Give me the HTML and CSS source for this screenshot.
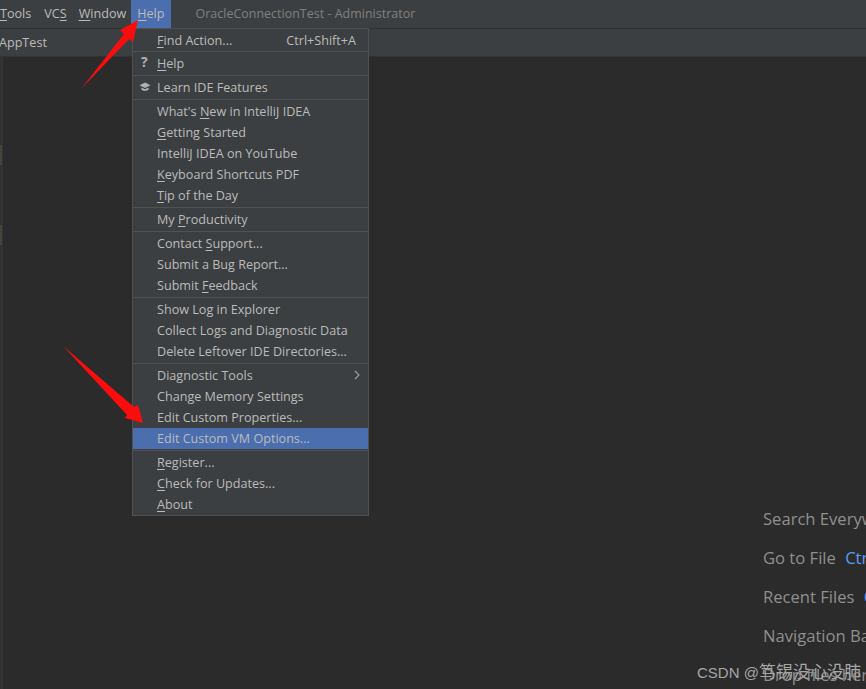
FILE: index.html
```html
<!DOCTYPE html>
<html lang="en">
<head>
<meta charset="utf-8">
<title>OracleConnectionTest - Administrator</title>
<link rel="stylesheet" href="styles.css">
</head>
<body>
<div class="ide">
  <header class="titlebar">
    <nav class="menubar">
      <span class="mb-item mb-tools"><u>T</u>ools</span>
      <span class="mb-item">VC<u>S</u></span>
      <span class="mb-item"><u>W</u>indow</span>
      <span class="mb-item mb-active"><u>H</u>elp</span>
    </nav>
    <span class="wintitle">OracleConnectionTest - Administrator</span>
  </header>
  <div class="navbar"><span class="crumb">AppTest</span></div>
  <main class="workspace">
    <aside class="gutter"><span class="mark mark-a"></span><span class="mark mark-b"></span></aside>
    <section class="editor">
      <ul class="hints">
        <li>Search Everywhere <b>Double Shift</b></li>
        <li>Go to File <b>Ctrl+Shift+N</b></li>
        <li>Recent Files <b>Ctrl+E</b></li>
        <li>Navigation Bar <b>Alt+Home</b></li>
        <li>Drop files here to open</li>
      </ul>
    </section>
  </main>

  <div class="menu">
    <div class="group"><div class="row"><span><u>F</u>ind Action...</span><span class="shortcut">Ctrl+Shift+A</span></div></div>
    <div class="group"><div class="row"><span class="qmark">?</span><span><u>H</u>elp</span></div></div>
    <div class="group"><div class="row">
      <svg class="cap" viewBox="0 0 12 10" width="12" height="10"><path d="M6 0.5 0.5 3.2 6 6 11.5 3.2Z"/><path d="M2.4 5.4V7.4C3.5 9.2 8.5 9.2 9.6 7.4V5.4L6 7.2Z"/></svg>
      <span>Learn IDE Features</span></div></div>
    <div class="group">
      <div class="row"><span>What's <u>N</u>ew in IntelliJ IDEA</span></div>
      <div class="row"><span><u>G</u>etting Started</span></div>
      <div class="row"><span>IntelliJ IDEA on YouTube</span></div>
      <div class="row"><span><u>K</u>eyboard Shortcuts PDF</span></div>
      <div class="row"><span><u>T</u>ip of the Day</span></div>
    </div>
    <div class="group"><div class="row"><span>My <u>P</u>roductivity</span></div></div>
    <div class="group">
      <div class="row"><span>Contact <u>S</u>upport...</span></div>
      <div class="row"><span>Submit a Bug Report...</span></div>
      <div class="row"><span>Submit <u>F</u>eedback</span></div>
    </div>
    <div class="group">
      <div class="row"><span>Show Log in Explorer</span></div>
      <div class="row"><span>Collect Logs and Diagnostic Data</span></div>
      <div class="row"><span>Delete Leftover IDE Directories...</span></div>
    </div>
    <div class="group">
      <div class="row"><span>Diagnostic Tools</span>
        <svg class="chev" viewBox="0 0 6 10" width="6" height="10"><path d="M1 1l4 4-4 4"/></svg></div>
      <div class="row"><span>Change Memory Settings</span></div>
      <div class="row"><span>Edit Custom Properties...</span></div>
      <div class="row row-active"><span>Edit Custom VM Options...</span></div>
    </div>
    <div class="group">
      <div class="row"><span><u>R</u>egister...</span></div>
      <div class="row"><span><u>C</u>heck for Updates...</span></div>
      <div class="row"><span><u>A</u>bout</span></div>
    </div>
  </div>

  <svg class="arrows" viewBox="0 0 866 689" width="866" height="689">
    <path d="M81 89 124 34 120 30 138 20 133 42 129 39Z"/>
    <path d="M63 346 134 407 138 405 143 423 125 418 127 415Z"/>
  </svg>
  <div class="watermark">CSDN @<span class="wm-cjk">笃锡没心没肺</span></div>
</div>
</body>
</html>
```

FILE: styles.css
```css
* { box-sizing: border-box; }
html, body { margin: 0; height: 100%; }
body { background: #2b2b2b; overflow: hidden; font-family: "Open Sans", "Noto Sans", sans-serif; }
u { text-underline-offset: 2px; text-decoration-thickness: 1px; }
.ide { position: relative; width: 866px; height: 689px; overflow: hidden; display: flex; flex-direction: column; }

.titlebar { height: 29px; flex: none; background: #3c3f41; border-bottom: 1px solid #323232; display: flex; align-items: stretch; font-size: 12.6px; color: #bbbbbb; }
.menubar { display: flex; margin-left: -6px; }
.mb-item { display: flex; align-items: center; padding: 0 6px 1px; white-space: nowrap; }
.mb-tools { padding-right: 7px; }
.mb-active { background: #4b6eaf; height: 28px; margin-left: -1px; }
.wintitle { margin-left: 25px; display: flex; align-items: center; height: 27px; color: #808080; font-size: 12.4px; letter-spacing: .05px; }

.navbar { height: 28px; flex: none; background: #3c3f41; border-bottom: 1px solid #323232; display: flex; align-items: center; font-size: 12.6px; color: #bbbbbb; }
.crumb { margin-left: -1px; }

.workspace { flex: 1; display: flex; min-height: 0; }
.gutter { width: 3px; flex: none; background: #313335; display: flex; flex-direction: column; }
.mark { display: block; width: 2px; height: 20px; background: #45433a; }
.mark-a { margin-top: 88px; }
.mark-b { margin-top: 60px; }
.editor { flex: 1; background: #2b2b2b; min-width: 0; padding: 442px 0 0 760px; }
.hints { list-style: none; margin: 0; padding: 0; font-size: 16.6px; color: #8f8f8f; white-space: nowrap; }
.hints li { height: 39px; line-height: 39px; }
.hints b { font-weight: 400; color: #589df6; margin-left: 5px; }

.menu { position: absolute; left: 132px; top: 28px; width: 237px; height: 488px; background: #3c3f41; border: 1px solid #515151; font-size: 12.6px; color: #bbbbbb; display: flex; flex-direction: column; }
.group { padding: 1px 0; border-bottom: 1px solid #515151; }
.group:first-child { padding-top: 0; }
.group:first-child .row { padding-top: 2px; }
.group:last-child { border-bottom: 0; }
.row { position: relative; height: 21px; display: flex; align-items: center; justify-content: space-between; padding: 0 12px 0 24px; white-space: nowrap; }
.row-active { background: #4b6eaf; }
.shortcut { color: #bbbbbb; }
.qmark { position: absolute; left: 8px; top: -1px; line-height: 20px; font-size: 14px; font-weight: 700; color: #afb1b3; }
.cap { position: absolute; left: 6px; top: 5px; fill: #afb1b3; }
.chev { fill: none; stroke: #9a9c9e; stroke-width: 1.2; margin: -2px -4px 0 0; }

.arrows { position: absolute; left: 0; top: 0; pointer-events: none; fill: #fb0d0d; }
.watermark { position: absolute; left: 697px; top: 663px; font-family: "Liberation Sans", "Noto Sans CJK SC", sans-serif; font-size: 15px; line-height: 20px; color: #a6a6a6; white-space: nowrap; }
.wm-cjk { font-size: 17px; }
```
